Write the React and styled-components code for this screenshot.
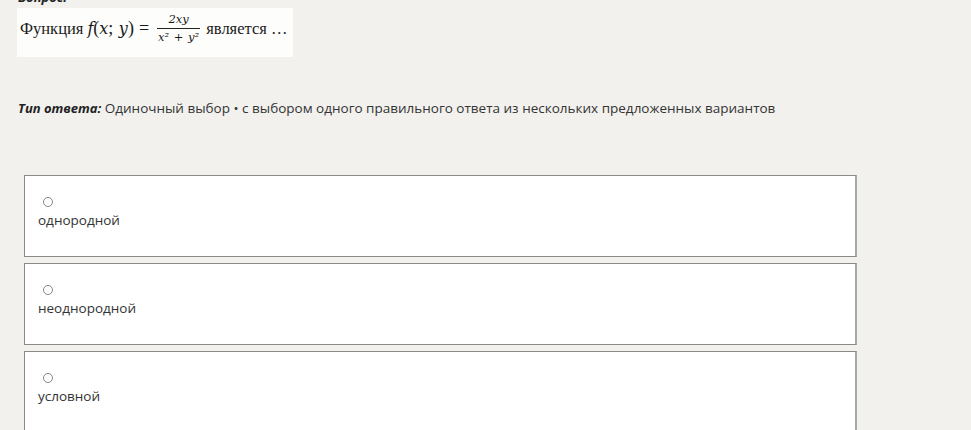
import React from "react";
import styled, { createGlobalStyle } from "styled-components";

const GlobalStyle = createGlobalStyle`
  html, body {
    margin: 0;
    padding: 0;
    background: #f2f1ee;
  }
  body {
    font-family: "Open Sans", "Noto Sans", sans-serif;
    color: #333;
    overflow: hidden;
  }
`;

const Page = styled.div`
  margin-top: -11px;
  padding-left: 17px;
  width: 971px;
  box-sizing: border-box;
`;

const Label = styled.div`
  font-size: 13px;
  font-weight: 700;
  font-style: italic;
  color: #222;
  line-height: 16px;
  height: 16px;
  margin-left: 1px;
`;

const Formula = styled.div`
  margin-top: 3px;
  width: 276px;
  height: 49px;
  background: #fdfdfc;
  display: flex;
  align-items: flex-start;
  padding: 5px 0 0 3px;
  box-sizing: border-box;
  font-family: "Liberation Serif", "DejaVu Serif", serif;
  font-size: 16.5px;
  color: #1a1a1a;
  white-space: nowrap;
`;

const MathRow = styled.div`
  display: flex;
  align-items: center;
  gap: 4px;
`;

const MathExpr = styled.span`
  font-size: 18px;
  word-spacing: 1px;

  & > i {
    font-family: "DejaVu Serif", serif;
    font-size: 16px;
  }
`;

const Eq = styled.span`
  margin-left: 5px;
`;

const Frac = styled.span`
  display: inline-flex;
  flex-direction: column;
  align-items: center;
  font-family: "DejaVu Serif", serif;
  font-size: 11.5px;
  font-style: italic;
  line-height: 13px;
  margin: 0 2px 0 4px;
  word-spacing: 1px;

  & > span:first-child {
    border-bottom: 1px solid #222;
    padding: 0 2px 2px;
    align-self: stretch;
    text-align: center;
  }
  & > span:last-child {
    padding: 2px 1px 0;
  }
`;

const AnswerType = styled.div`
  margin-top: 42px;
  font-size: 13.5px;
  line-height: 18px;
  margin-left: 1px;

  & > b {
    font-size: 13px;
    font-style: italic;
    color: #222;
  }
`;

const Options = styled.div`
  margin-top: 58px;
  margin-left: 7px;
  width: 833px;
  display: flex;
  flex-direction: column;
  gap: 6px;
`;

const Option = styled.label`
  display: block;
  background: #fff;
  border: 1px solid #8a8a8a;
  border-right: 2px solid #a8a8a8;
  height: 82px;
  box-sizing: border-box;
  padding: 20px 0 0 13px;
  font-size: 13.5px;
  line-height: 18px;
  color: #333;
`;

const Radio = styled.span`
  display: block;
  width: 8px;
  height: 8px;
  border: 1px solid #888;
  border-radius: 50%;
  margin: 1px 0 4px 5px;
`;

const options = ["однородной", "неоднородной", "условной"];

export default function App() {
  return (
    <>
      <GlobalStyle />
      <Page>
        <Label>Вопрос:</Label>
        <Formula>
          <MathRow>
            <span>Функция</span>
            <MathExpr>
              <i>f</i>(<i>x</i>; <i>y</i>)<Eq>=</Eq>
            </MathExpr>
            <Frac>
              <span>2xy</span>
              <span>x² + y²</span>
            </Frac>
            <span>является …</span>
          </MathRow>
        </Formula>
        <AnswerType>
          <b>Тип ответа:</b> Одиночный выбор • с выбором одного правильного
          ответа из нескольких предложенных вариантов
        </AnswerType>
        <Options>
          {options.map((o) => (
            <Option key={o}>
              <Radio />
              {o}
            </Option>
          ))}
        </Options>
      </Page>
    </>
  );
}
